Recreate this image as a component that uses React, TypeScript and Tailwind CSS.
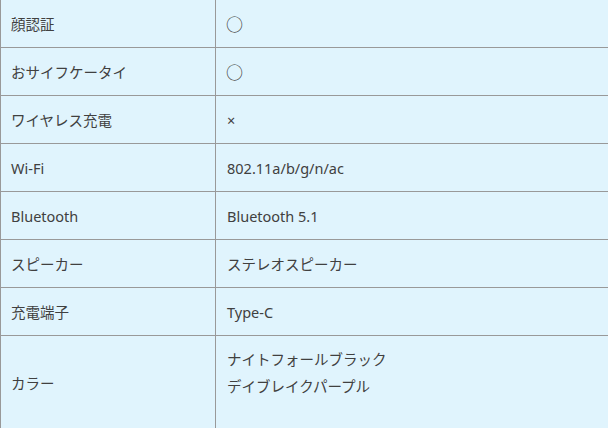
import React from 'react';

const specs: { label: string; value: string[] }[] = [
  { label: '顔認証', value: ['○'] },
  { label: 'おサイフケータイ', value: ['○'] },
  { label: 'ワイヤレス充電', value: ['×'] },
  { label: 'Wi-Fi', value: ['802.11a/b/g/n/ac'] },
  { label: 'Bluetooth', value: ['Bluetooth 5.1'] },
  { label: 'スピーカー', value: ['ステレオスピーカー'] },
  { label: '充電端子', value: ['Type-C'] },
  { label: 'カラー', value: ['ナイトフォールブラック', 'デイブレイクパープル'] },
];

const App: React.FC = () => {
  return (
    <div
      className="w-[608px] h-[428px] overflow-hidden bg-[#e0f4fd] text-[14.5px] text-[#404040]"
      style={{ fontFamily: '"Noto Sans", "Noto Sans CJK JP", sans-serif' }}
    >
      {specs.map((row, i) => {
        const last = i === specs.length - 1;
        return (
          <div
            key={row.label}
            className={
              last
                ? 'flex h-[100px] border-l border-[#999]'
                : 'flex h-[48px] border-b border-l border-[#999]'
            }
          >
            <div
              className={
                last
                  ? 'w-[215px] shrink-0 flex items-center pl-[10px] pb-[4px] border-r border-[#999]'
                  : 'w-[215px] shrink-0 flex items-center pl-[10px] pt-[2px] border-r border-[#999]'
              }
            >
              {row.label}
            </div>
            <div
              className={
                last
                  ? 'flex-1 flex flex-col pl-[11px] pt-[10px] leading-[27px]'
                  : 'flex-1 flex items-center pl-[11px] pt-[2px]'
              }
            >
              {row.value.map((v) =>
                v === '○' ? (
                  <span key={v} className="text-[17px] ml-[-1px]">
                    {v}
                  </span>
                ) : (
                  <div key={v}>{v}</div>
                )
              )}
            </div>
          </div>
        );
      })}
    </div>
  );
};

export default App;
